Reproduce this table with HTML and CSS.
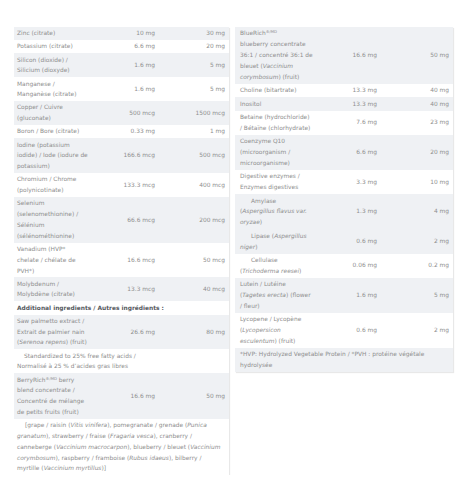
FILE: index.html
```html
<!DOCTYPE html>
<html lang="en">
<head>
<meta charset="utf-8">
<title>Supplement facts</title>
<link rel="stylesheet" href="styles.css">
</head>
<body>
<div class="page">
  <table class="facts facts-left">
    <colgroup><col class="c-name"><col class="c-amt"><col class="c-dv"></colgroup>
    <tbody>
      <tr class="g"><td>Zinc (citrate)</td><td class="n">10 mg</td><td class="n dv">30 mg</td></tr>
      <tr><td>Potassium (citrate)</td><td class="n">6.6 mg</td><td class="n dv">20 mg</td></tr>
      <tr class="g"><td>Silicon (dioxide) / Silicium (dioxyde)</td><td class="n">1.6 mg</td><td class="n dv">5 mg</td></tr>
      <tr><td>Manganese / Manganèse (citrate)</td><td class="n">1.6 mg</td><td class="n dv">5 mg</td></tr>
      <tr class="g"><td>Copper / Cuivre (gluconate)</td><td class="n">500 mcg</td><td class="n dv">1500 mcg</td></tr>
      <tr><td>Boron / Bore (citrate)</td><td class="n">0.33 mg</td><td class="n dv">1 mg</td></tr>
      <tr class="g"><td>Iodine (potassium iodide) / Iode (iodure de potassium)</td><td class="n">166.6 mcg</td><td class="n dv">500 mcg</td></tr>
      <tr><td>Chromium / Chrome (polynicotinate)</td><td class="n">133.3 mcg</td><td class="n dv">400 mcg</td></tr>
      <tr class="g"><td>Selenium (selenomethionine) / Sélénium (sélénométhionine)</td><td class="n">66.6 mcg</td><td class="n dv">200 mcg</td></tr>
      <tr><td>Vanadium (HVP* chelate / chélate de PVH*)</td><td class="n">16.6 mcg</td><td class="n dv">50 mcg</td></tr>
      <tr class="g"><td>Molybdenum / Molybdène (citrate)</td><td class="n">13.3 mcg</td><td class="n dv">40 mcg</td></tr>
      <tr><td colspan="3" class="head">Additional ingredients / Autres ingrédients :</td></tr>
      <tr class="g"><td>Saw palmetto extract / Extrait de palmier nain (<i>Serenoa repens</i>) (fruit)</td><td class="n">26.6 mg</td><td class="n dv">80 mg</td></tr>
      <tr><td colspan="3" class="sub">Standardized to 25% free fatty acids /<br>Normalisé à 25 % d’acides gras libres</td></tr>
      <tr class="g"><td>BerryRich<sup>®/MD</sup> berry<br>blend concentrate / Concentré de mélange de petits fruits (fruit)</td><td class="n">16.6 mg</td><td class="n dv">50 mg</td></tr>
      <tr><td colspan="3" class="sub long">[grape / raisin (<i>Vitis vinifera</i>), pomegranate / grenade (<i>Punica granatum</i>), strawberry / fraise (<i>Fragaria vesca</i>), cranberry / canneberge (<i>Vaccinium macrocarpon</i>), blueberry / bleuet (<i>Vaccinium corymbosum</i>), raspberry / framboise (<i>Rubus idaeus</i>), bilberry / myrtille (<i>Vaccinium myrtillus</i>)]</td></tr>
    </tbody>
  </table>

  <table class="facts facts-right">
    <colgroup><col class="c-name"><col class="c-amt"><col class="c-dv"></colgroup>
    <tbody>
      <tr class="g"><td>BlueRich<sup>®/MD</sup><br>blueberry concentrate <span class="nw">36:1 / concentré 36:1 de</span> bleuet (<i>Vaccinium corymbosum</i>) (fruit)</td><td class="n">16.6 mg</td><td class="n dv">50 mg</td></tr>
      <tr><td>Choline (bitartrate)</td><td class="n">13.3 mg</td><td class="n dv">40 mg</td></tr>
      <tr class="g"><td>Inositol</td><td class="n">13.3 mg</td><td class="n dv">40 mg</td></tr>
      <tr><td>Betaine (hydrochloride) / Bétaïne (chlorhydrate)</td><td class="n">7.6 mg</td><td class="n dv">23 mg</td></tr>
      <tr class="g"><td>Coenzyme Q10 (microorganism / microorganisme)</td><td class="n">6.6 mg</td><td class="n dv">20 mg</td></tr>
      <tr><td>Digestive enzymes / Enzymes digestives</td><td class="n">3.3 mg</td><td class="n dv">10 mg</td></tr>
      <tr class="g"><td class="ind">Amylase (<i>Aspergillus flavus var. oryzae</i>)</td><td class="n">1.3 mg</td><td class="n dv">4 mg</td></tr>
      <tr class="g"><td class="ind">Lipase (<i>Aspergillus niger</i>)</td><td class="n">0.6 mg</td><td class="n dv">2 mg</td></tr>
      <tr><td class="ind">Cellulase (<i>Trichoderma reesei</i>)</td><td class="n">0.06 mg</td><td class="n dv">0.2 mg</td></tr>
      <tr class="g"><td>Lutein / Lutéine (<i>Tagetes erecta</i>) (flower / fleur)</td><td class="n">1.6 mg</td><td class="n dv">5 mg</td></tr>
      <tr><td>Lycopene / Lycopène (<i>Lycopersicon esculentum</i>) (fruit)</td><td class="n">0.6 mg</td><td class="n dv">2 mg</td></tr>
      <tr class="g"><td colspan="3" class="note">*HVP: Hydrolyzed Vegetable Protein / *PVH : protéine végétale hydrolysée</td></tr>
    </tbody>
  </table>
</div>
</body>
</html>
```

FILE: styles.css
```css
html, body {
  margin: 0;
  padding: 0;
  background: #ffffff;
}

.page {
  display: grid;
  grid-template-columns: 215px 218px;
  column-gap: 6px;
  align-items: start;
  padding: 27px 0 0 14px;
  font-family: "DejaVu Sans", "Noto Sans", sans-serif;
  font-size: 5.9px;
  line-height: 10.8px;
  color: #8e8e8e;
}

.facts {
  width: 100%;
  border-collapse: collapse;
  table-layout: fixed;
  background: #ffffff;
  box-shadow: 1px 1px 1px rgba(0, 0, 0, 0.09);
}

.facts td {
  padding: 1.2px 4px 1.2px 3px;
  vertical-align: middle;
  text-align: left;
}

.facts-left .c-name { width: 79px; }
.facts-left .c-amt { width: 66px; }
.facts-left .c-dv { width: 70px; }

.facts-right .c-name { width: 81px; }
.facts-right .c-amt { width: 65px; }
.facts-right .c-dv { width: 72px; }

.facts-right td {
  padding-top: 1.35px;
  padding-bottom: 1.35px;
}

.facts-right td:first-child,
.facts-right td.note {
  padding-left: 5px;
}

.facts .nw {
  white-space: nowrap;
}

.facts tr.g td {
  background: #eff1f4;
}

.facts td.n {
  text-align: right;
  white-space: nowrap;
}

.facts td.dv {
  padding-right: 4px;
}

.facts td.head {
  font-weight: 700;
  color: #555a60;
}

.facts td.sub {
  text-indent: 7px;
}

.facts td.long {
  text-indent: 8px;
}

.facts td.ind {
  text-indent: 11px;
}

.facts sup {
  font-size: 3.8px;
  line-height: 0;
  vertical-align: 2.4px;
}

.facts i {
  font-style: italic;
}
```
